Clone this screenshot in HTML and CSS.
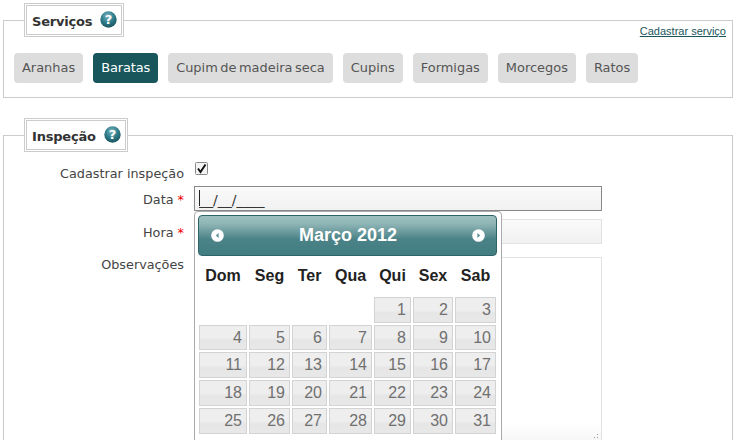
FILE: index.html
```html
<!DOCTYPE html>
<html lang="pt">
<head>
<meta charset="utf-8">
<title>Inspeção</title>
<link rel="stylesheet" href="styles.css">
</head>
<body>
<svg class="defs" width="0" height="0" aria-hidden="true">
  <defs>
    <radialGradient id="help" cx="45%" cy="30%" r="70%">
      <stop offset="0" stop-color="#7fb6c0"/>
      <stop offset="0.55" stop-color="#2f7d8c"/>
      <stop offset="1" stop-color="#1b5560"/>
    </radialGradient>
  </defs>
</svg>
<fieldset class="box box-servicos">
  <legend class="box-title"><span class="title-text">Serviços</span><svg class="help" viewBox="0 0 17 17" width="17" height="17"><circle cx="8.5" cy="8.5" r="8.2" fill="url(#help)"/><text x="8.5" y="13.2" text-anchor="middle" class="help-mark">?</text></svg></legend>
  <a class="add-link" href="#">Cadastrar serviço</a>
  <div class="tags">
    <span class="tag">Aranhas</span>
    <span class="tag tag-on">Baratas</span>
    <span class="tag">Cupim de madeira seca</span>
    <span class="tag">Cupins</span>
    <span class="tag">Formigas</span>
    <span class="tag">Morcegos</span>
    <span class="tag">Ratos</span>
  </div>
</fieldset>
<fieldset class="box box-inspecao">
  <legend class="box-title"><span class="title-text">Inspeção</span><svg class="help" viewBox="0 0 17 17" width="17" height="17"><circle cx="8.5" cy="8.5" r="8.2" fill="url(#help)"/><text x="8.5" y="13.2" text-anchor="middle" class="help-mark">?</text></svg></legend>
  <div class="form">
    <label class="lbl lbl-check">Cadastrar inspeção</label>
    <div class="ctl ctl-check">
      <svg class="check" viewBox="0 0 13 13" width="13" height="13"><rect x="0.5" y="0.5" width="12" height="12" rx="1" fill="#f4f4f4" stroke="#8a8a8a"/><path d="M3 6.5 L5.5 10 L10.5 2.5" fill="none" stroke="#111" stroke-width="1.9"/></svg>
    </div>
    <label class="lbl lbl-date">Data <span class="req">*</span></label>
    <div class="ctl ctl-date">
      <input class="field field-focus" type="text" value="__/__/____">
      <span class="caret"></span>
      <div class="dp">
        <div class="dp-head">
          <svg class="dp-nav" viewBox="0 0 13 13" width="13" height="13"><circle cx="6.5" cy="6.5" r="6.3" fill="#fff"/><path d="M7.6 4 L4.8 6.5 L7.6 9Z" fill="#5b9093"/></svg>
          <span class="dp-title">Março 2012</span>
          <svg class="dp-nav" viewBox="0 0 13 13" width="13" height="13"><circle cx="6.5" cy="6.5" r="6.3" fill="#fff"/><path d="M5.4 4 L8.2 6.5 L5.4 9Z" fill="#5b9093"/></svg>
        </div>
        <div class="dp-grid">
          <span class="dow">Dom</span><span class="dow">Seg</span><span class="dow">Ter</span><span class="dow">Qua</span><span class="dow">Qui</span><span class="dow">Sex</span><span class="dow">Sab</span>
          <span class="blank"></span><span class="blank"></span><span class="blank"></span><span class="blank"></span>
          <span class="day">1</span><span class="day">2</span><span class="day">3</span>
          <span class="day">4</span><span class="day">5</span><span class="day">6</span><span class="day">7</span><span class="day">8</span><span class="day">9</span><span class="day">10</span>
          <span class="day">11</span><span class="day">12</span><span class="day">13</span><span class="day">14</span><span class="day">15</span><span class="day">16</span><span class="day">17</span>
          <span class="day">18</span><span class="day">19</span><span class="day">20</span><span class="day">21</span><span class="day">22</span><span class="day">23</span><span class="day">24</span>
          <span class="day">25</span><span class="day">26</span><span class="day">27</span><span class="day">28</span><span class="day">29</span><span class="day">30</span><span class="day">31</span>
        </div>
      </div>
    </div>
    <label class="lbl lbl-time">Hora <span class="req">*</span></label>
    <div class="ctl"><input class="field" type="text"></div>
    <label class="lbl lbl-obs">Observações</label>
    <div class="ctl ctl-area">
      <textarea class="area"></textarea>
      <svg class="grip" viewBox="0 0 6 5" width="6" height="5"><rect x="4" y="0" width="1" height="1" fill="#999"/><rect x="1" y="3" width="1" height="1" fill="#999"/><rect x="4" y="3" width="1" height="1" fill="#999"/></svg>
    </div>
  </div>
</fieldset>
</body>
</html>
```
FILE: styles.css
```css
html, body {
  height: 440px;
  overflow: hidden;
}
body {
  margin: 0;
  padding: 3px;
  background: #fff;
  box-sizing: border-box;
  font-family: "DejaVu Sans", sans-serif;
  font-size: 12.8px;
  color: #444;
}
.defs {
  position: absolute;
}
.box {
  margin: 0 0 20px;
  padding: 0;
  min-width: 0;
  width: 730px;
  box-sizing: border-box;
  border: 1px solid #ccc;
}
.box-servicos {
  height: 95px;
}
.box-title {
  margin-left: 20px;
  padding: 0 4px 0 5px;
  height: 34px;
  box-sizing: border-box;
  border: 3px double #ccc;
  display: flex;
  align-items: center;
  gap: 8px;
  font-size: 13px;
  font-weight: bold;
  letter-spacing: -0.2px;
  color: #333;
}
.title-text {
  padding-top: 3px;
}
.help {
  display: block;
  position: relative;
  top: -1px;
}
.help-mark {
  font-family: "DejaVu Sans", sans-serif;
  font-size: 13px;
  font-weight: bold;
  letter-spacing: 0;
  fill: #fff;
}
.add-link {
  display: block;
  margin: -12px 6px 0 0;
  height: 12px;
  line-height: 12px;
  text-align: right;
  font-family: "Liberation Sans", sans-serif;
  font-size: 11px;
  color: #18565c;
}
.tags {
  display: flex;
  gap: 10px;
  margin: 16px 0 0 10px;
}
.tag {
  height: 30px;
  line-height: 30px;
  padding: 0 8px;
  border-radius: 4px;
  background: #ddd;
  color: #555;
  font-size: 12.95px;
  word-spacing: -1.6px;
  white-space: nowrap;
}
.tag-on {
  background: #18565c;
  color: #fff;
  letter-spacing: -0.12px;
}
.form {
  display: grid;
  grid-template-columns: 180px 408px;
  column-gap: 10px;
  grid-template-rows: 17px 25px 25px auto;
  row-gap: 8px;
  margin-top: 9px;
}
.lbl {
  text-align: right;
  white-space: nowrap;
  line-height: 16px;
}
.lbl-check {
  padding-top: 5px;
}
.lbl-date {
  padding-top: 6px;
}
.lbl-time {
  padding-top: 6px;
}
.lbl-obs {
  padding-top: 5px;
}
.req {
  color: #e00;
}
.ctl {
  position: relative;
}
.check {
  display: block;
  margin: 1px 0 0 1px;
}
.field {
  display: block;
  width: 408px;
  height: 25px;
  box-sizing: border-box;
  margin: 0;
  padding: 2px 4px 0;
  border: 1px solid #e2e2e2;
  border-radius: 0;
  outline: none;
  background: linear-gradient(#fafafa, #f1f1f1);
  font-family: "DejaVu Sans", sans-serif;
  font-size: 14px;
  color: #333;
}
.field-focus {
  border-color: #888;
}
.caret {
  position: absolute;
  left: 5px;
  top: 4px;
  width: 1px;
  height: 16px;
  background: #222;
}
.ctl-area {
  padding-top: 5px;
}
.area {
  display: block;
  width: 408px;
  height: 184px;
  box-sizing: border-box;
  margin: 0;
  padding: 0;
  border: 1px solid #e2e2e2;
  border-radius: 0;
  outline: none;
  resize: none;
  background: linear-gradient(#fff 0, #fff 166px, #f5f5f5 184px);
}
.grip {
  position: absolute;
  right: 3px;
  top: 182px;
}
.dp {
  position: absolute;
  z-index: 5;
  left: 0;
  top: 25px;
  width: 308px;
  height: 236px;
  box-sizing: border-box;
  padding: 3px;
  background: #fff;
  border: 1px solid #aaa;
  border-radius: 4px;
}
.dp-head {
  display: flex;
  align-items: center;
  justify-content: space-between;
  height: 41px;
  box-sizing: border-box;
  margin-right: 1px;
  padding: 0 11px 0 12px;
  border: 1px solid #2e6468;
  border-radius: 4px;
  background: linear-gradient(#9dbfbf 0, #8fb5b6 20%, #4a8287 60%, #417d82 100%);
}
.dp-title {
  font-family: "Liberation Sans", sans-serif;
  font-size: 18px;
  font-weight: bold;
  color: #fff;
}
.dp-nav {
  display: block;
}
.dp-grid {
  display: grid;
  grid-template-columns: 48px 41px 35px 43px 37px 40px 41px;
  grid-template-rows: 39px 26px 25px 26px 26px 26px;
  gap: 2px;
  margin: 0 0 0 1px;
  font-family: "Liberation Sans", sans-serif;
}
.dow {
  text-align: center;
  font-size: 16px;
  font-weight: bold;
  color: #222;
  line-height: 40px;
}
.day {
  box-sizing: border-box;
  border: 1px solid #d3d3d3;
  background: linear-gradient(#eeeeee 0, #eeeeee 50%, #e6e6e6 62%, #e8e8e8 100%);
  text-align: right;
  padding-right: 4px;
  font-size: 16px;
  line-height: 24px;
  color: #707070;
}
```
